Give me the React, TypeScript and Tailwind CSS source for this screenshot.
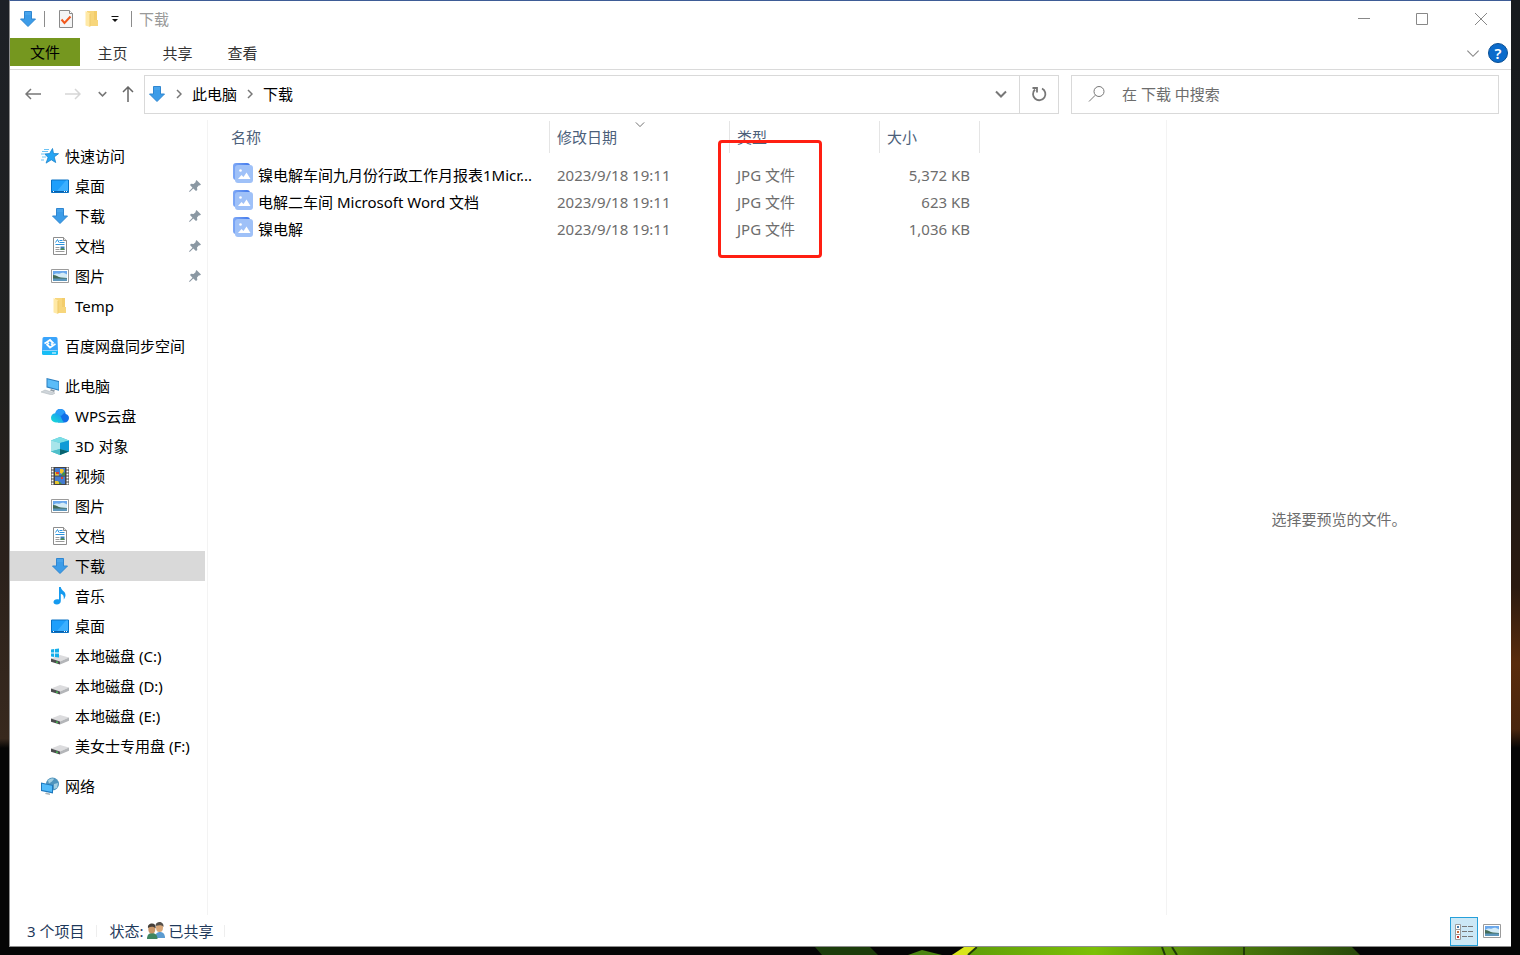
import React, { useState } from 'react';

interface IconProps {
  className?: string;
}

const DownloadIcon: React.FC<IconProps> = ({ className = 'w-[18px] h-[18px]' }) => (
  <svg viewBox="0 0 18 18" className={className} aria-hidden="true">
    <path d="M5.500 1.500h7v7.500h4L9 16.500 1.500 9h4z" fill="#3c9ce8" stroke="#2f86d0" strokeWidth="1" />
    <path d="M6 2h6v3H6z" fill="#48a4ec" />
  </svg>
);

const FolderIcon: React.FC<IconProps> = ({ className = 'w-[18px] h-[18px]' }) => (
  <svg viewBox="0 0 18 18" className={className} aria-hidden="true">
    <path d="M4 1h10v9h1v6H4z" fill="#f7d67c" />
    <path d="M11 1h3v9h-3z" fill="#f3cd6c" />
    <path d="M2.500 1L7 3.500V17L2.500 15.500z" fill="#ffe9a6" />
    <path d="M7 4v12.500" stroke="#edc96b" strokeWidth="1" />
  </svg>
);

const CheckDocIcon: React.FC<IconProps> = ({ className = 'w-[18px] h-[18px]' }) => (
  <svg viewBox="0 0 18 18" className={className} aria-hidden="true">
    <path d="M2.500 .500h10l3 3v14h-13z" fill="#f4f4f4" stroke="#8a8a8a" />
    <path d="M12.500 .500v3h3" fill="#fff" stroke="#8a8a8a" />
    <path d="M4.500 9.500l3 3.500 6-6.500" fill="none" stroke="#f0581c" strokeWidth="2" />
  </svg>
);

const StarIcon = () => (
  <svg viewBox="0 0 18 18" className="w-[18px] h-[18px]" aria-hidden="true">
    <path d="M11.500 1.500l1 5 5 .200-4.300 3.200 1.500 5.600-4.400-2.700-5.200 3.300 2-5.700-3.400-3.400 4.900-.400z" fill="#27a5f3" stroke="#1681cc" strokeWidth=".8" />
    <path d="M3 2.500h5M1 4.500h6M0 7h3M1 10h4M0 13h3" stroke="#6cc3f5" strokeWidth="1" />
  </svg>
);

const DesktopIcon = () => (
  <svg viewBox="0 0 18 18" className="w-[18px] h-[18px]" aria-hidden="true">
    <path d="M.500 3h17v12.500H.500z" fill="#1e9ffb" stroke="#0a72c4" />
    <path d="M6 14L15 3.500h2V14z" fill="#3cb0ff" />
    <path d="M1 14.500h16" stroke="#0a5ea8" />
    <path d="M2 14.500h1M13 14.500h1M15 14.500h1" stroke="#fff" />
  </svg>
);

const DocumentIcon = () => (
  <svg viewBox="0 0 18 18" className="w-[18px] h-[18px]" aria-hidden="true">
    <path d="M2.500 .500h10l3 3v14h-13z" fill="#fff" stroke="#8d8d8d" />
    <path d="M12.500 .500v3h3" fill="#e6e6e6" stroke="#8d8d8d" />
    <path d="M4.500 5.500l2-3L8 5.500M8.500 3.500h3M8.500 5.500h5M4.500 7.500h9" stroke="#2d94dc" fill="none" />
    <path d="M4.500 10.500h4M4.500 12.500h4M4.500 14.500h9" stroke="#9a9a9a" />
    <path d="M9.500 9.500h4v3.500h-4z" fill="#3e7fb8" />
    <path d="M9.500 12l2-1 2 1v1h-4z" fill="#4e8c50" />
  </svg>
);

const PictureIcon = () => (
  <svg viewBox="0 0 18 18" className="w-[18px] h-[18px]" aria-hidden="true">
    <path d="M.500 2.500h17v13H.500z" fill="#fff" stroke="#9b9b9b" />
    <path d="M2 4h14v10H2z" fill="#6ba8ec" />
    <path d="M3 7.500c2-2 4 0 6-1s4-1 7 1V11H2z" fill="#d3ebf7" />
    <path d="M2 8c3 0 5 2 8 2.500l6 .500v1H2z" fill="#456c59" />
    <path d="M2 11.500h14V14H2z" fill="#5d97bd" />
  </svg>
);

const BaiduIcon = () => (
  <svg viewBox="0 0 18 18" className="w-[18px] h-[18px]" aria-hidden="true">
    <path d="M3 0h12q1.500 0 1.500 1.500L17 14H1l.500-12.500Q1.500 0 3 0z" fill="#3aa4fb" />
    <path d="M1 13.500h16v3q0 1.500-1.500 1.500h-13Q1 18 1 16.500z" fill="#18bdf5" />
    <path d="M1.500 13.500h15" stroke="#a5ddff" strokeWidth=".8" />
    <path d="M11 16h4" stroke="#fff" />
    <path d="M6 5l3 -2 3.500 3.500M12 8.500L9 10.500 5.500 7" fill="none" stroke="#fff" strokeWidth="1.800" />
    <path d="M3.500 6.500L6 5l2 2M14.500 7L12 8.500l-2-2" fill="none" stroke="#fff" strokeWidth="1.600" />
  </svg>
);

const ComputerIcon = () => (
  <svg viewBox="0 0 18 18" className="w-[18px] h-[18px]" aria-hidden="true">
    <path d="M5.500 1L18.500 4v10L5.500 10.500z" fill="#2b7fc0" />
    <path d="M6.500 2.200l11 2.700v7.600L6.500 9.500z" fill="#5abcf8" />
    <path d="M10 12l4 1.500-1 1.500-4-1.500z" fill="#8f9aa3" />
    <path d="M0 15l4-2 10 3-3 2z" fill="#cfd5da" stroke="#a9b0b6" strokeWidth=".5" />
  </svg>
);

const CloudIcon = () => (
  <svg viewBox="0 0 18 18" className="w-[18px] h-[18px]" aria-hidden="true">
    <defs>
      <linearGradient id="cloudLeft" x1="0" y1="1" x2="1" y2="0">
        <stop offset="0" stopColor="#19e0d4" />
        <stop offset="1" stopColor="#1b8cf8" />
      </linearGradient>
    </defs>
    <path d="M9 2c3.500 0 5.500 2.300 5.700 5 2 .5 3.300 2 3.300 4 0 2.500-2 4.500-4.500 4.500H7L4.500 7C4.500 4 6.500 2 9 2z" fill="#126fe8" />
    <path d="M9 2c2.600 0 4.300 1 5.200 3L10 9 4.200 6.500C4.800 3.500 6.500 2 9 2z" fill="#2b9df9" />
    <path d="M4.800 6.200c2.700 0 4.200 1.500 5.200 3.800 1 2.500 1.500 4.500 3.500 5.500H4.800C2 15.500 0 13.500 0 10.800s2-4.600 4.800-4.600z" fill="url(#cloudLeft)" />
  </svg>
);

const CubeIcon = () => (
  <svg viewBox="0 0 18 18" className="w-[18px] h-[18px]" aria-hidden="true">
    <path d="M0 3.500L9 0l9 3.500v11L9 18l-9-3.500z" fill="#39bdd0" />
    <path d="M0 3.500L9 0l9 3.500L9 6z" fill="#7bdde5" />
    <path d="M0 3.500L9 6v6L0 14.500z" fill="#a8e5ea" />
    <path d="M18 3.500L9 6v6l9 2.500z" fill="#109bd6" />
    <path d="M9 12v6l-9-3.500z" fill="#4fbfc9" />
    <path d="M9 12v6l9-3.500z" fill="#08626f" />
  </svg>
);

const VideoIcon = () => (
  <svg viewBox="0 0 18 18" className="w-[18px] h-[18px]" aria-hidden="true">
    <path d="M0 0h18v18H0z" fill="#444" />
    <path d="M1.500 .500v17.500M16.500 .500v17.500" stroke="#fff" strokeWidth="2" strokeDasharray="2 1" />
    <path d="M4 1h10v7.500H4zM4 9.500h10V17H4z" fill="#447bd0" />
    <path d="M4 5h3l1 3.500H4zM4 14h3l2 3H4z" fill="#e6c52e" />
    <path d="M9 2h3l1 2-2 3-2-1z" fill="#f3c726" />
    <path d="M5 5h3v2H5zM10 10h2v2h-2z" fill="#dd3f30" />
    <path d="M12 5.500h2v3h-4zM8 14l3 3H8z" fill="#429144" />
  </svg>
);

const MusicIcon = () => (
  <svg viewBox="0 0 18 18" className="w-[18px] h-[18px]" aria-hidden="true">
    <path d="M8 0h1.800c.4 3.800 4.700 4 4.700 8 0 1.700-.8 3-1.700 4.500.2-3.200-.5-5.200-3-5.700V14c0 2-1.700 3.500-4 3.500S2.500 16.300 2.500 15c0-1.500 1.500-2.800 3.500-2.800.8 0 1.500.1 2 .4z" fill="#149aef" />
  </svg>
);

const DriveIcon: React.FC<{ windows?: boolean }> = ({ windows = false }) => (
  <svg viewBox="0 0 18 18" className="w-[18px] h-[18px]" aria-hidden="true">
    <path d="M0 11.500L9 8l9 2.500-9 4z" fill="#dcdcde" />
    <path d="M0 11.500l9 3v3l-9-2.700z" fill="#4c4c4e" />
    <path d="M9 14.500l9-4v3.200l-9 3.800z" fill="#b4b6b9" />
    <path d="M6 14.500v1.500" stroke="#45d352" strokeWidth="1.500" />
    {windows && (
      <path d="M0 2.500l3.200-.500v3.600H0zM4 2l4-.600v4.200H4zM0 6.400h3.200V10L0 9.500zM4 6.400h4v4.200L4 10z" fill="#14aeea" />
    )}
  </svg>
);

const NetworkIcon = () => (
  <svg viewBox="0 0 18 18" className="w-[18px] h-[18px]" aria-hidden="true">
    <circle cx="11.500" cy="7" r="6.500" fill="#4f94bd" />
    <path d="M7 3.500c2-2 5-2.500 6-1.500L11 4.500 8 6.500zM13 7l4-1-1 5-3 1z" fill="#a4cfe2" />
    <path d="M0 5.500L12 8v8.500L0 14z" fill="#1e78bd" />
    <path d="M1 6.800l10 2v6.300l-10-2z" fill="#52bbfa" />
    <path d="M5 15.500l4 1V18l-5-1z" fill="#a8b4bb" />
  </svg>
);

const PinIcon = () => (
  <svg viewBox="0 0 12 12" className="w-3 h-3" aria-hidden="true">
    <path d="M7.500 0L12 4.500l-1.200 1-.8-.200-2 2.200.300 2.500-1.300 1L4.300 8.500.700 12 0 11.300l3.500-3.600L1 5l1-1.200 2.600.200 2.200-2-.200-.800z" fill="#8b98a3" />
  </svg>
);

const ImageFileIcon = () => (
  <svg viewBox="0 0 20 20" className="w-5 h-5 shrink-0" aria-hidden="true">
    <defs>
      <linearGradient id="imageBack">
        <stop offset="0" stopColor="#7ea8f6" />
        <stop offset="1" stopColor="#4078ec" />
      </linearGradient>
    </defs>
    <rect x="0" y="0" width="17" height="17" rx="3" fill="url(#imageBack)" />
    <rect x="2" y="2" width="18" height="18" rx="3" fill="#9fc1f8" />
    <path d="M5 16l3.500-4 2 2L13.500 9.500 17.500 16z" fill="#fff" />
    <circle cx="7.500" cy="7.500" r="1.300" fill="#fff" />
  </svg>
);

const PeopleIcon = () => (
  <svg viewBox="0 0 18 18" className="w-[18px] h-[18px]" aria-hidden="true">
    <path d="M8 16c0-4 2-6 5-6s5 2 5 6z" fill="#5b9bd0" />
    <ellipse cx="12.500" cy="5.500" rx="3.500" ry="4.500" fill="#d8a779" />
    <path d="M8.500 4C8.500 1 10.500 0 12.500 0S17 1.500 16.500 5c-1-2-4-2.500-8-1z" fill="#55504a" />
    <path d="M0 17c0-4 2-6 5-6s5.500 2 5.500 6z" fill="#3f8560" />
    <ellipse cx="4.800" cy="7" rx="3.500" ry="4.500" fill="#c99567" />
    <path d="M1 6c-.500-3 1.500-4.500 4-4.500S9 3 8.700 6.500C7 4.500 4 4 1 6z" fill="#453f39" />
  </svg>
);

const DetailsIcon = () => (
  <svg viewBox="0 0 18 18" className="w-[18px] h-[18px]" aria-hidden="true">
    <path d="M.500 1.500h5v5h-5zM.500 6.500h5v5h-5zM.500 11.500h5v5h-5z" fill="#fff" stroke="#9a9a9a" />
    <path d="M2 3h2v2H2z" fill="#4679a8" />
    <path d="M2 8h2v2H2z" fill="#c86b3c" />
    <path d="M2 13h2v2H2z" fill="#c22f28" />
    <path d="M7 3.500h5M13 3.500h5M7 8.500h5M13 8.500h5M7 13.500h5M13 13.500h5" stroke="#787878" strokeWidth="1" />
  </svg>
);

const Chevron: React.FC<IconProps> = ({ className = '' }) => (
  <svg viewBox="0 0 12 8" className={className} fill="none" stroke="currentColor" aria-hidden="true">
    <path d="M1 1.500l5 5 5-5" />
  </svg>
);

const Crumb = () => (
  <svg viewBox="0 0 6 10" className="w-[6px] h-[10px]" fill="none" stroke="#777" strokeWidth="1.500" aria-hidden="true">
    <path d="M1 1l4 4-4 4" />
  </svg>
);

interface NavItem {
  id: string;
  label: string;
  icon: React.ReactNode;
  root?: boolean;
  pinned?: boolean;
}

const navGroups: NavItem[][] = [
  [
    { id: 'quick', label: '快速访问', icon: <StarIcon />, root: true },
    { id: 'q-desktop', label: '桌面', icon: <DesktopIcon />, pinned: true },
    { id: 'q-downloads', label: '下载', icon: <DownloadIcon />, pinned: true },
    { id: 'q-documents', label: '文档', icon: <DocumentIcon />, pinned: true },
    { id: 'q-pictures', label: '图片', icon: <PictureIcon />, pinned: true },
    { id: 'q-temp', label: 'Temp', icon: <FolderIcon /> },
  ],
  [{ id: 'baidu', label: '百度网盘同步空间', icon: <BaiduIcon />, root: true }],
  [
    { id: 'pc', label: '此电脑', icon: <ComputerIcon />, root: true },
    { id: 'wps', label: 'WPS云盘', icon: <CloudIcon /> },
    { id: 'objects', label: '3D 对象', icon: <CubeIcon /> },
    { id: 'videos', label: '视频', icon: <VideoIcon /> },
    { id: 'pictures', label: '图片', icon: <PictureIcon /> },
    { id: 'documents', label: '文档', icon: <DocumentIcon /> },
    { id: 'downloads', label: '下载', icon: <DownloadIcon /> },
    { id: 'music', label: '音乐', icon: <MusicIcon /> },
    { id: 'desktop', label: '桌面', icon: <DesktopIcon /> },
    { id: 'drive-c', label: '本地磁盘 (C:)', icon: <DriveIcon windows /> },
    { id: 'drive-d', label: '本地磁盘 (D:)', icon: <DriveIcon /> },
    { id: 'drive-e', label: '本地磁盘 (E:)', icon: <DriveIcon /> },
    { id: 'drive-f', label: '美女士专用盘 (F:)', icon: <DriveIcon /> },
  ],
  [{ id: 'network', label: '网络', icon: <NetworkIcon />, root: true }],
];

const files = [
  { name: '镍电解车间九月份行政工作月报表1Micr...', date: '2023/9/18 19:11', type: 'JPG 文件', size: '5,372 KB' },
  { name: '电解二车间 Microsoft Word 文档', date: '2023/9/18 19:11', type: 'JPG 文件', size: '623 KB' },
  { name: '镍电解', date: '2023/9/18 19:11', type: 'JPG 文件', size: '1,036 KB' },
];

const TitleBar = () => (
  <header className="flex h-9 items-center justify-between">
    <div className="flex items-center pl-[9px]">
      <DownloadIcon />
      <span className="ml-[7px] h-4 w-px bg-[#8c8c8c]" />
      <button title="属性" className="ml-3">
        <CheckDocIcon />
      </button>
      <button title="新建文件夹" className="ml-2">
        <FolderIcon />
      </button>
      <button title="自定义快速访问工具栏" className="ml-[10px]">
        <svg viewBox="0 0 8 8" className="h-2 w-2" aria-hidden="true">
          <path d="M.500 1.500h7" stroke="#111" />
          <path d="M1 4h6L4 7z" fill="#111" />
        </svg>
      </button>
      <span className="ml-3 h-4 w-px bg-[#8c8c8c]" />
      <h1 className="ml-[7px] text-[#999]">下载</h1>
    </div>
    <div className="flex h-full text-[#888]">
      <button title="最小化" className="flex w-[58px] items-center justify-center">
        <svg viewBox="0 0 12 12" className="h-3 w-3" stroke="currentColor" aria-hidden="true">
          <path d="M0 5.500h12" />
        </svg>
      </button>
      <button title="最大化" className="flex w-[58px] items-center justify-center">
        <svg viewBox="0 0 12 12" className="h-3 w-3" fill="none" stroke="currentColor" aria-hidden="true">
          <path d="M.500 .500h11v11H.500z" />
        </svg>
      </button>
      <button title="关闭" className="flex w-[60px] items-center justify-center">
        <svg viewBox="0 0 12 12" className="h-3 w-3" stroke="currentColor" aria-hidden="true">
          <path d="M0 0l12 12M12 0L0 12" />
        </svg>
      </button>
    </div>
  </header>
);

const Ribbon = () => (
  <div className="mt-px flex h-8 items-start border-b border-[#dadada]">
    <button className="h-7 w-[70px] bg-[#75971f] text-black">文件</button>
    {['主页', '共享', '查看'].map((tab) => (
      <button key={tab} className="h-[30px] w-[65px] text-[#333]">
        {tab}
      </button>
    ))}
    <div className="ml-auto flex h-[30px] items-center gap-1 pr-[3px]">
      <button title="展开功能区" className="p-1 text-[#888]">
        <Chevron className="h-[9px] w-[14px]" />
      </button>
      <button title="帮助" className="h-5 w-5 rounded-full border border-[#0a4f94] bg-[#0b6bcb] font-semibold leading-[18px] text-white">
        ?
      </button>
    </div>
  </div>
);

const AddressBar = () => (
  <div className="mb-[2px] flex h-12 items-center pl-[15px] pr-3 text-black">
    <button title="后退" className="text-[#777]">
      <svg viewBox="0 0 16 12" className="h-3 w-4" fill="none" stroke="currentColor" strokeWidth="1.500" aria-hidden="true">
        <path d="M6 1L1 6l5 5M1 6h15" />
      </svg>
    </button>
    <button title="前进" className="ml-6 text-[#d6d6d6]" disabled>
      <svg viewBox="0 0 16 12" className="h-3 w-4" fill="none" stroke="currentColor" strokeWidth="1.500" aria-hidden="true">
        <path d="M10 1l5 5-5 5M15 6H0" />
      </svg>
    </button>
    <button title="最近浏览的位置" className="ml-[17px] text-[#777]">
      <Chevron className="h-[6px] w-[9px] stroke-2" />
    </button>
    <button title="上移" className="ml-[15px] text-[#666]">
      <svg viewBox="0 0 12 16" className="h-4 w-3" fill="none" stroke="currentColor" strokeWidth="1.500" aria-hidden="true">
        <path d="M1 6l5-5 5 5M6 1v15" />
      </svg>
    </button>
    <div className="ml-[10px] flex h-[39px] flex-1 border border-[#d9d9d9]">
      <nav className="flex flex-1 items-center pl-[3px]" aria-label="地址">
        <DownloadIcon />
        <span className="ml-[10px]">
          <Crumb />
        </span>
        <a href="#pc" className="ml-[10px]">
          此电脑
        </a>
        <span className="ml-[10px]">
          <Crumb />
        </span>
        <a href="#downloads" className="ml-[10px]">
          下载
        </a>
      </nav>
      <button title="上一个位置" className="flex w-9 items-center justify-center text-[#777]">
        <Chevron className="h-2 w-3 stroke-2" />
      </button>
      <button title="刷新" className="flex w-[39px] items-center justify-center border-l border-[#d9d9d9] text-[#777]">
        <svg viewBox="0 0 16 16" className="h-4 w-4" fill="none" stroke="currentColor" strokeWidth="1.800" aria-hidden="true">
          <path d="M11 2.500A6.200 6.200 0 1 1 4 3.500" />
          <path d="M1.500 2H6v4.500" />
        </svg>
      </button>
    </div>
    <label className="ml-3 flex h-[39px] w-[428px] items-center border border-[#d9d9d9] pl-4">
      <svg viewBox="0 0 18 18" className="h-[18px] w-[18px]" fill="none" stroke="#777" aria-hidden="true">
        <circle cx="11" cy="6.500" r="5" />
        <path d="M7.300 10.200L1 16.500" />
      </svg>
      <input
        type="text"
        aria-label="搜索"
        placeholder="在 下载 中搜索"
        className="ml-4 min-w-0 flex-1 outline-none placeholder:text-[#6d6d6d]"
      />
    </label>
  </div>
);

const Sidebar = () => {
  const [selected, setSelected] = useState('downloads');

  return (
    <nav className="flex w-[198px] shrink-0 flex-col gap-[10px] border-r border-[#f3f3f3] pr-[2px] pt-[21px] text-black" aria-label="导航窗格">
      {navGroups.map((group) => (
        <ul key={group[0].id}>
          {group.map((item) => (
            <li key={item.id}>
              <a
                href={`#${item.id}`}
                onClick={() => setSelected(item.id)}
                className={`flex h-[30px] items-center gap-[6px] whitespace-nowrap pr-1 ${
                  item.root ? 'pl-[31px]' : 'pl-[41px]'
                } ${selected === item.id ? 'bg-[#d9d9d9]' : ''}`}
              >
                <span className="shrink-0">{item.icon}</span>
                <span>{item.label}</span>
                {item.pinned && (
                  <span className="ml-auto">
                    <PinIcon />
                  </span>
                )}
              </a>
            </li>
          ))}
        </ul>
      ))}
    </nav>
  );
};

const FileList = () => (
  <main className="min-w-0 flex-1 pl-[15px] pt-px">
    <div className="relative w-[757px]">
      <table className="w-full table-fixed border-separate border-spacing-0 text-left text-[#6d6d6d]">
        <colgroup>
          <col className="w-[327px]" />
          <col className="w-[180px]" />
          <col className="w-[150px]" />
          <col className="w-[100px]" />
        </colgroup>
        <thead className="text-[#4c607a]">
          <tr className="h-8">
            <th className="border-r border-[#e5e5e5] pl-2 font-normal">名称</th>
            <th className="relative border-r border-[#e5e5e5] pl-[7px] font-normal" aria-sort="descending">
              修改日期
              <Chevron className="absolute left-1/2 top-0 h-[7px] w-[10px] -translate-x-1/2 text-[#555]" />
            </th>
            <th className="border-r border-[#e5e5e5] pl-[7px] font-normal">类型</th>
            <th className="border-r border-[#e5e5e5] pl-[7px] font-normal">大小</th>
          </tr>
        </thead>
        <tbody>
          <tr className="h-2" aria-hidden="true" />
          {files.map((file) => (
            <tr key={file.name} className="h-[27px]">
              <td className="pl-[10px] text-black">
                <div className="flex items-start gap-[5px] whitespace-nowrap pb-[2px]">
                  <ImageFileIcon />
                  <span className="pt-[2px]">{file.name}</span>
                </div>
              </td>
              <td className="pl-[7px]">{file.date}</td>
              <td className="pl-[7px]">{file.type}</td>
              <td className="pr-[10px] text-right">{file.size}</td>
            </tr>
          ))}
        </tbody>
      </table>
      {/* highlight around the type column */}
      <div className="absolute left-[495px] top-[19px] h-[118px] w-[104px] rounded-[4px] border-[3px] border-[#ff1f12]" />
    </div>
  </main>
);

const StatusBar = () => (
  <footer className="flex h-[31px] items-center pl-[17px] pr-[10px] text-[#1e395b]">
    <span>3 个项目</span>
    <span className="ml-3 h-3 w-px bg-[#eee]" />
    <span className="ml-3">状态:</span>
    <span className="ml-[3px]">
      <PeopleIcon />
    </span>
    <span className="ml-1">已共享</span>
    <span className="ml-[10px] h-3 w-px bg-[#eee]" />
    <button title="详细信息" className="ml-auto flex h-[29px] w-7 items-center justify-center self-end border border-[#26a0da] bg-[#cce8f6]">
      <DetailsIcon />
    </button>
    <button title="大缩略图" className="ml-[5px]">
      <PictureIcon />
    </button>
  </footer>
);

const WallpaperEdge = () => (
  <svg viewBox="0 0 1520 8" preserveAspectRatio="none" className="block h-2 w-full bg-[#050505]" aria-hidden="true">
    <defs>
      <linearGradient id="leaf">
        <stop offset="0" stopColor="#5c9a08" />
        <stop offset=".35" stopColor="#7cc007" />
        <stop offset=".6" stopColor="#55890a" />
        <stop offset="1" stopColor="#28490b" />
      </linearGradient>
    </defs>
    <path d="M815 0h55l8 8h-56z" fill="#1c3d0b" />
    <path d="M908 8l14-5 20 5z" fill="#4b8511" />
    <path d="M972 0h380l8 8H952z" fill="url(#leaf)" />
    <path d="M964 0h14l-10 8h-16z" fill="#d8e51a" />
    <path d="M977 0l-9 8M1162 0l3 8M1172 0l5 8M1244 0v8" stroke="#203a08" strokeWidth="2" />
  </svg>
);

export default function App() {
  return (
    <div lang="zh-CN" className="flex min-h-screen flex-col bg-black font-['Noto_Sans','Noto_Sans_CJK_SC',sans-serif] text-[15px] leading-5">
      <div className="flex flex-1">
        <div className="w-[9px] shrink-0 bg-[linear-gradient(#1d2126_0%,#20211f_40%,#2b211b_60%,#38291e_78%,#050505_79%)]" />
        <div className="flex min-w-0 flex-1 flex-col border-b border-l border-t border-b-[#8e8e8e] border-l-[#8e8e8e] border-t-[#3e5c96] bg-white">
          <TitleBar />
          <Ribbon />
          <AddressBar />
          <div className="flex flex-1">
            <Sidebar />
            <FileList />
            <aside className="flex w-[345px] shrink-0 items-center justify-center border-l border-[#f3f3f3] pt-[2px] text-[#6d6d6d]">
              选择要预览的文件。
            </aside>
          </div>
          <StatusBar />
        </div>
        <div className="w-[9px] shrink-0 bg-[linear-gradient(#171b1f_0%,#1b1a18_45%,#2b1a10_62%,#5a2c0c_70%,#4a260e_77%,#050505_79%)]" />
      </div>
      <WallpaperEdge />
    </div>
  );
}
